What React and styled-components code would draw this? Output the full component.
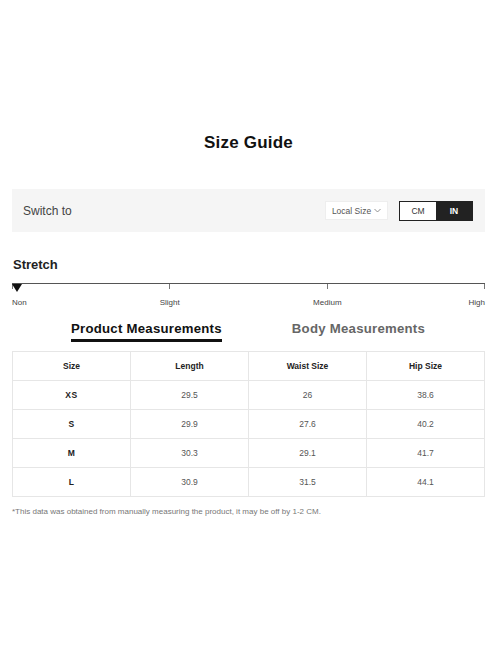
import styled, { createGlobalStyle } from 'styled-components';

const GlobalStyle = createGlobalStyle`
  html, body {
    margin: 0;
    padding: 0;
    background: #fff;
    font-family: "Liberation Sans", Arial, sans-serif;
  }
`;

const Page = styled('div')({
  width: '500px',
  height: '660px',
  padding: '0 15px 0 12px',
  boxSizing: 'border-box',
  display: 'flex',
  flexDirection: 'column',
});

const Title = styled('h1')({
  margin: '133px 0 0',
  textAlign: 'center',
  fontSize: '17px',
  fontWeight: 700,
  lineHeight: '20px',
  color: '#111',
  letterSpacing: '0.2px',
});

const SwitchBar = styled('div')({
  marginTop: '36px',
  height: '43px',
  background: '#f5f5f5',
  display: 'flex',
  alignItems: 'center',
  padding: '0 12px 0 11px',
});

const SwitchLabel = styled('span')({
  fontSize: '12px',
  color: '#444',
  flex: 1,
});

const LocalSelect = styled('div')({
  height: '19px',
  width: '63px',
  background: '#fff',
  border: '1px solid #eee',
  boxSizing: 'border-box',
  fontSize: '8.5px',
  color: '#555',
  display: 'flex',
  alignItems: 'center',
  justifyContent: 'center',
  gap: '3px',
  marginRight: '11px',
});

const Toggle = styled('div')({
  display: 'flex',
  height: '18px',
  border: '1px solid #222',
});

const ToggleBtn = styled('div')(({ $active }) => ({
  width: '36px',
  display: 'flex',
  alignItems: 'center',
  justifyContent: 'center',
  fontSize: '8.5px',
  fontWeight: $active ? 700 : 400,
  background: $active ? '#222' : '#fff',
  color: $active ? '#fff' : '#333',
}));

const SectionTitle = styled('div')({
  marginTop: '25px',
  marginLeft: '1px',
  fontSize: '13px',
  fontWeight: 700,
  color: '#222',
});

const Scale = styled('div')({
  marginTop: '6px',
  position: 'relative',
});

const ScaleLine = styled('div')({
  height: '1px',
  background: '#555',
  marginTop: '5px',
  display: 'flex',
  justifyContent: 'space-between',
});

const Tick = styled('span')({
  width: '1px',
  height: '5px',
  marginTop: '1px',
  background: '#777',
});

const Marker = styled('div')({
  position: 'absolute',
  left: '0px',
  top: '6px',
  width: 0,
  height: 0,
  borderLeft: '5px solid transparent',
  borderRight: '5px solid transparent',
  borderTop: '8px solid #111',
});

const LabelRow = styled('div')({
  display: 'flex',
  justifyContent: 'space-between',
  marginTop: '14px',
  fontSize: '8px',
  color: '#444',
  height: '10px',
});

const LabelSpot = styled('span')(({ $align }) => ({
  width: 0,
  display: 'flex',
  whiteSpace: 'nowrap',
  justifyContent: $align === 'left' ? 'flex-start' : $align === 'right' ? 'flex-end' : 'center',
}));

const Tabs = styled('div')({
  display: 'flex',
  marginTop: '13px',
  paddingLeft: '59px',
  gap: '70px',
});

const Tab = styled('div')(({ $active }) => ({
  fontSize: '13.2px',
  fontWeight: 700,
  color: $active ? '#111' : '#666',
  paddingBottom: '3px',
  borderBottom: $active ? '3px solid #111' : '3px solid transparent',
  letterSpacing: '0.25px',
}));

const Table = styled('table')({
  marginTop: '9px',
  width: '473px',
  borderCollapse: 'collapse',
  tableLayout: 'fixed',
  '& td, & th': {
    border: '1px solid #e6e6e6',
    height: '28px',
    textAlign: 'center',
    fontSize: '8.5px',
    padding: 0,
  },
  '& th': {
    fontWeight: 700,
    color: '#222',
  },
  '& td': {
    color: '#555',
  },
  '& td:first-child': {
    fontWeight: 700,
    color: '#222',
    letterSpacing: '0.5px',
  },
});

const Note = styled('p')({
  margin: '10px 0 0',
  fontSize: '8px',
  color: '#777',
});

const rows = [
  ['XS', '29.5', '26', '38.6'],
  ['S', '29.9', '27.6', '40.2'],
  ['M', '30.3', '29.1', '41.7'],
  ['L', '30.9', '31.5', '44.1'],
];

const levels = [
  { label: 'Non', align: 'left' },
  { label: 'Slight', align: 'center' },
  { label: 'Medium', align: 'center' },
  { label: 'High', align: 'right' },
];

export default function App() {
  return (
    <>
      <GlobalStyle />
      <Page>
        <Title>Size Guide</Title>
        <SwitchBar>
          <SwitchLabel>Switch to</SwitchLabel>
          <LocalSelect>
            Local Size
            <svg width="7" height="5" viewBox="0 0 7 5">
              <path d="M0.5 1 L3.5 4 L6.5 1" fill="none" stroke="#777" strokeWidth="0.8" />
            </svg>
          </LocalSelect>
          <Toggle>
            <ToggleBtn>CM</ToggleBtn>
            <ToggleBtn $active>IN</ToggleBtn>
          </Toggle>
        </SwitchBar>
        <SectionTitle>Stretch</SectionTitle>
        <Scale>
          <ScaleLine>
            {levels.map((l) => <Tick key={l.label} />)}
          </ScaleLine>
          <Marker />
          <LabelRow>
            {levels.map((l) => (
              <LabelSpot key={l.label} $align={l.align}>{l.label}</LabelSpot>
            ))}
          </LabelRow>
        </Scale>
        <Tabs>
          <Tab $active>Product Measurements</Tab>
          <Tab>Body Measurements</Tab>
        </Tabs>
        <Table>
          <thead>
            <tr>
              <th>Size</th>
              <th>Length</th>
              <th>Waist Size</th>
              <th>Hip Size</th>
            </tr>
          </thead>
          <tbody>
            {rows.map((r) => (
              <tr key={r[0]}>
                {r.map((c, i) => <td key={i}>{c}</td>)}
              </tr>
            ))}
          </tbody>
        </Table>
        <Note>*This data was obtained from manually measuring the product, it may be off by 1-2 CM.</Note>
      </Page>
    </>
  );
}
